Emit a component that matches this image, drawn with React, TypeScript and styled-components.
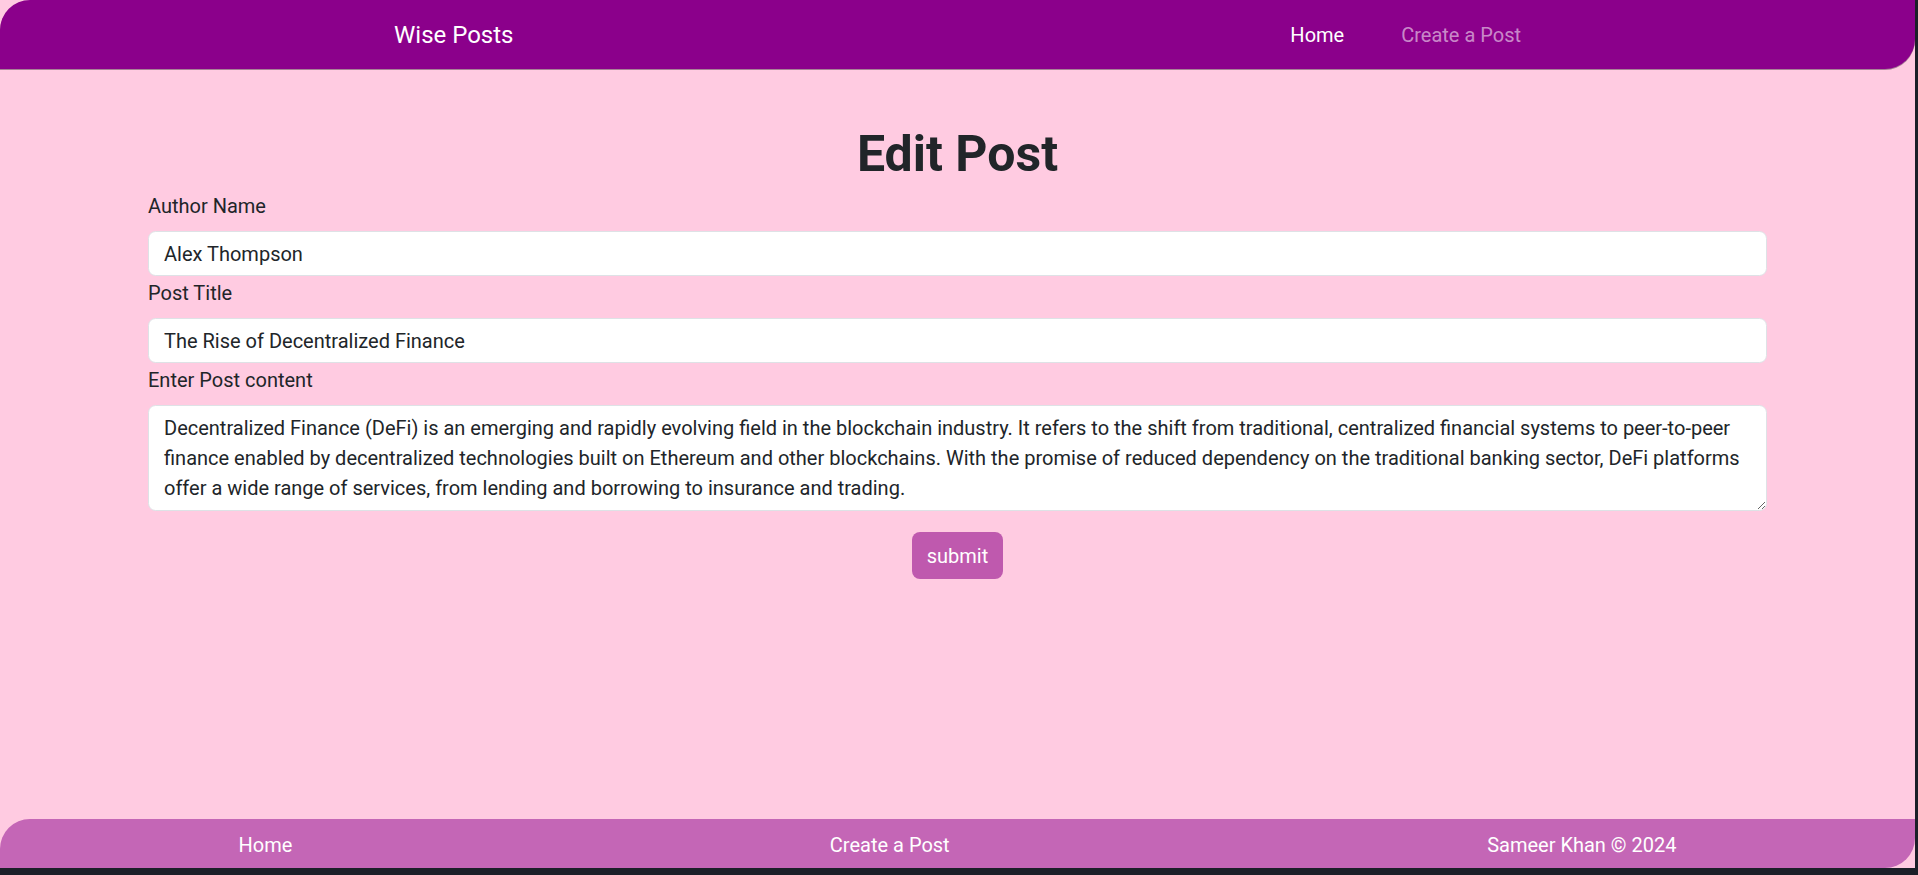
import React from "react";
import styled, { createGlobalStyle } from "styled-components";

const GlobalStyle = createGlobalStyle`
  html, body {
    margin: 0;
    padding: 0;
    background: #1b1f28;
  }
  body {
    font-family: "Segoe UI", Roboto, "Noto Sans", sans-serif;
    color: #212529;
  }
  * { box-sizing: border-box; }
`;

const Page = styled.div`
  width: calc(100% - 3px);
  height: 868px;
  background: #ffcbe1;
  display: flex;
  flex-direction: column;
`;

const NavBar = styled.nav`
  height: 69px;
  flex: none;
  background: #8b008b;
  border-radius: 30px 0 30px 0;
  box-shadow: 0 1px 0 rgba(60, 40, 60, 0.45);
  display: flex;
  align-items: center;
`;

const NavInner = styled.div`
  width: 1127px;
  margin: 0 auto;
  display: flex;
  align-items: center;
  justify-content: space-between;
`;

const Brand = styled.a`
  font-size: 24px;
  line-height: 36px;
  color: #ffffff;
  text-decoration: none;
`;

const NavLinks = styled.div`
  display: flex;
  align-items: center;
  gap: 57px;
`;

const NavLink = styled.a<{ $active?: boolean }>`
  font-size: 20px;
  line-height: 30px;
  text-decoration: none;
  color: ${(p) => (p.$active ? "#ffffff" : "rgba(255, 255, 255, 0.55)")};
`;

const Main = styled.main`
  flex: 1;
  padding: 55px 148px 0;
`;

const Title = styled.h1`
  margin: 0 0 5px;
  font-size: 50px;
  line-height: 60px;
  font-weight: 700;
  text-align: center;
  color: #212529;
`;

const Form = styled.form`
  display: flex;
  flex-direction: column;
`;

const Label = styled.label`
  display: block;
  font-size: 20px;
  line-height: 30px;
  margin: 2px 0 10px;
  color: #212529;
`;

const fieldBase = `
  display: block;
  width: 100%;
  font-family: inherit;
  font-size: 20px;
  line-height: 30px;
  color: #212529;
  background: #ffffff;
  border: 1px solid #dee2e6;
  border-radius: 7.5px;
  padding: 6.5px 15px;
  outline: none;
`;

const Input = styled.input`
  ${fieldBase}
  height: 45px;
`;

const TextArea = styled.textarea`
  ${fieldBase}
  height: 106px;
  resize: vertical;
`;

const ButtonRow = styled.div`
  display: flex;
  justify-content: center;
  margin-top: 21px;
`;

const SubmitButton = styled.button`
  font-family: inherit;
  font-size: 20px;
  line-height: 30px;
  padding: 8.5px 15px;
  color: #ffffff;
  background: #bf59ae;
  border: none;
  border-radius: 8px;
  cursor: pointer;
`;

const Footer = styled.footer`
  height: 49px;
  flex: none;
  background: #c466b6;
  border-radius: 30px 0 30px 0;
  display: flex;
  align-items: center;
`;

const FooterInner = styled.div`
  width: 1438px;
  margin: 0 auto;
  display: flex;
  align-items: center;
  justify-content: space-between;
`;

const FooterItem = styled.a`
  font-size: 20px;
  line-height: 30px;
  padding-top: 2px;
  color: #ffffff;
  text-decoration: none;
`;

const content =
  "Decentralized Finance (DeFi) is an emerging and rapidly evolving field in the blockchain industry. It refers to the shift from traditional, centralized financial systems to peer-to-peer finance enabled by decentralized technologies built on Ethereum and other blockchains. With the promise of reduced dependency on the traditional banking sector, DeFi platforms offer a wide range of services, from lending and borrowing to insurance and trading.";

export default function App() {
  return (
    <>
      <GlobalStyle />
      <Page>
        <NavBar>
          <NavInner>
            <Brand href="#">Wise Posts</Brand>
            <NavLinks>
              <NavLink href="#" $active>
                Home
              </NavLink>
              <NavLink href="#">Create a Post</NavLink>
            </NavLinks>
          </NavInner>
        </NavBar>
        <Main>
          <Title>Edit Post</Title>
          <Form onSubmit={(e) => e.preventDefault()}>
            <Label htmlFor="author">Author Name</Label>
            <Input id="author" defaultValue="Alex Thompson" />
            <Label htmlFor="title">Post Title</Label>
            <Input id="title" defaultValue="The Rise of Decentralized Finance" />
            <Label htmlFor="content">Enter Post content</Label>
            <TextArea id="content" rows={3} defaultValue={content} />
            <ButtonRow>
              <SubmitButton type="submit">submit</SubmitButton>
            </ButtonRow>
          </Form>
        </Main>
        <Footer>
          <FooterInner>
            <FooterItem href="#">Home</FooterItem>
            <FooterItem href="#">Create a Post</FooterItem>
            <FooterItem href="#">Sameer Khan © 2024</FooterItem>
          </FooterInner>
        </Footer>
      </Page>
    </>
  );
}
